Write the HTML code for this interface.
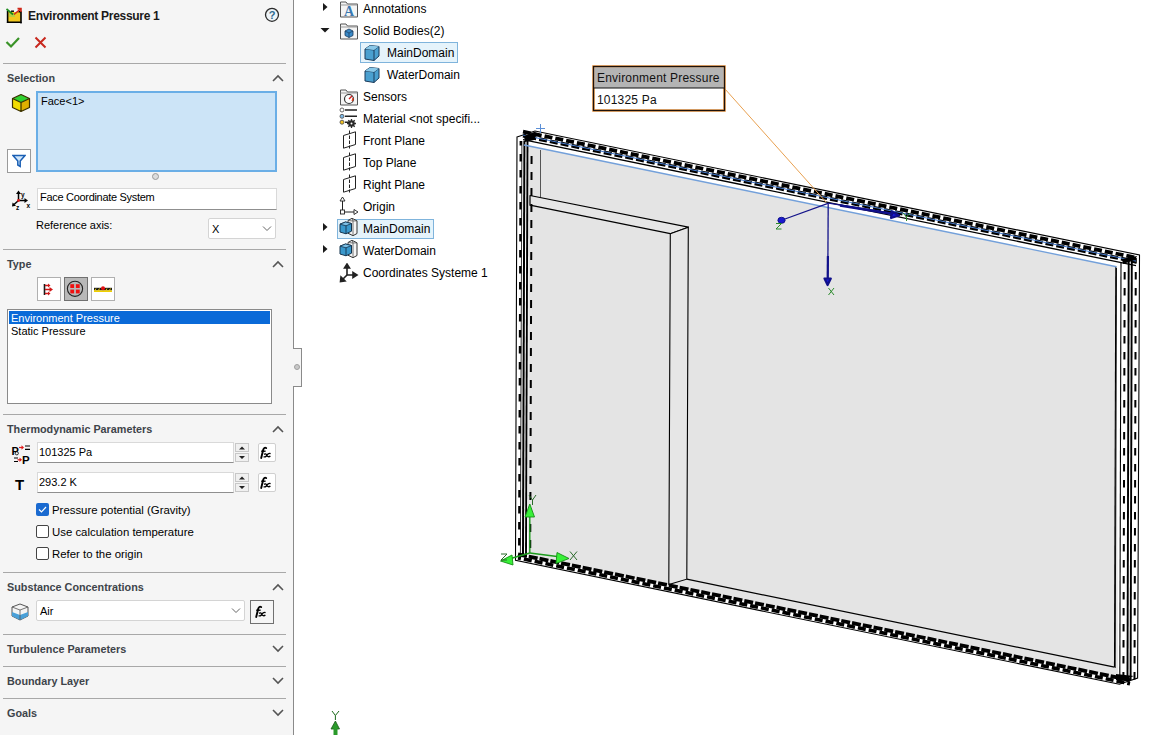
<!DOCTYPE html>
<html><head><meta charset="utf-8">
<style>
*{margin:0;padding:0;box-sizing:border-box}
html,body{width:1153px;height:735px;overflow:hidden;background:#fff;font-family:"Liberation Sans",sans-serif;color:#000}
.a{position:absolute}
#panel{position:absolute;left:0;top:0;width:294px;height:735px;background:#f5f5f5;border-right:1px solid #8a8a8a}
.notch{position:absolute;left:293px;top:348px;width:9px;height:39px;background:#f5f5f5;border:1px solid #8a8a8a;border-left:none}
.sep{position:absolute;left:3px;width:283px;height:1px;background:#a8a8a8}
.hdr{position:absolute;left:7px;font-size:10.8px;font-weight:bold;color:#3e444a;white-space:nowrap}
.t{position:absolute;font-size:11px;white-space:nowrap;color:#000}
.inp{position:absolute;background:#fff;border:1px solid #d9d9d9;border-bottom:1px solid #8f8f8f}
.caret{position:absolute;left:272px;width:12px;height:8px}
.tree{position:absolute;font-size:12px;white-space:nowrap;color:#000}
</style></head><body>
<div id="panel">
  <!-- title -->
  <svg class="a" style="left:5px;top:7px" width="18" height="18" viewBox="0 0 18 18"><rect x="3" y="5" width="13" height="10" fill="#f2c81e"/><rect x="4" y="6" width="6" height="4" fill="#b8d040"/><path d="M2.6 4 V15.2 H16 V4.8 H13.5" stroke="#000" stroke-width="1.6" fill="none"/><path d="M16 15.2 V16.5 M2.6 15.2 V16" stroke="#000" stroke-width="1.4"/><path d="M6 4.2 H9" stroke="#000" stroke-width="1.4"/><path d="M1.5 2 L8 7.5" stroke="#1a8a1a" stroke-width="1.7"/><path d="M9 7.5 L15.8 1.8 M12.5 1.6 H16 V5" stroke="#d0281a" stroke-width="1.6" fill="none"/></svg>
  <div class="a" style="left:28px;top:9px;font-size:12px;letter-spacing:-0.3px;font-weight:bold;color:#1a1a1a;white-space:nowrap">Environment Pressure 1</div>
  <svg class="a" style="left:263px;top:6px" width="18" height="18" viewBox="0 0 18 18"><circle cx="9" cy="8.8" r="6.5" fill="#eef4f8" stroke="#2a2a2a" stroke-width="1.3"/><text x="9" y="12.8" font-size="11" font-weight="bold" text-anchor="middle" fill="#2e6a8e" font-family="Liberation Sans">?</text></svg>
  <svg class="a" style="left:5px;top:35px" width="16" height="14" viewBox="0 0 16 14">
    <path d="M1.5 7 L6 11.5 L14 3" stroke="#3a9328" stroke-width="2.2" fill="none"/>
  </svg>
  <svg class="a" style="left:34px;top:36px" width="13" height="13" viewBox="0 0 13 13">
    <path d="M1.5 1.5 L11.5 11.5 M11.5 1.5 L1.5 11.5" stroke="#c8281e" stroke-width="2" fill="none"/>
  </svg>
  <div class="sep" style="top:63px"></div>

  <!-- Selection -->
  <div class="hdr" style="top:72px">Selection</div>
  <svg class="caret" style="top:74px" viewBox="0 0 12 8"><path d="M1 7 L6 2 L11 7" stroke="#555" stroke-width="1.6" fill="none"/></svg>
  <svg class="a" style="left:11px;top:93px" width="20" height="20" viewBox="0 0 20 20"><path d="M10 9.5 L18.5 5.5 V14.5 L10 18.5 Z" fill="#e0b000"/><path d="M1.5 5.5 L10 9.5 V18.5 L1.5 14.5 Z" fill="#f2dc00"/><path d="M1.5 5.5 L10 1.5 L18.5 5.5 L10 9.5 Z" fill="#30d030"/><path d="M1.5 5.5 L10 1.5 L18.5 5.5 V14.5 L10 18.5 L1.5 14.5 Z M1.5 5.5 L10 9.5 L18.5 5.5 M10 9.5 V18.5" fill="none" stroke="#3a3000" stroke-width="1.2" stroke-linejoin="round"/></svg>
  <div class="a" style="left:36px;top:91px;width:241px;height:81px;background:#cce4f7;border:2px solid #6aaee6"></div>
  <div class="t" style="left:41px;top:95px">Face&lt;1&gt;</div>
  <div class="a" style="left:7px;top:149px;width:24px;height:24px;background:#fff;border:1px solid #9a9a9a"></div>
  <svg class="a" style="left:12px;top:154px" width="14" height="14" viewBox="0 0 14 14">
    <path d="M1 1.5 H13 L8.2 7 V12.5 L5.8 11 V7 Z" fill="#cfe6fb" stroke="#1a5fb4" stroke-width="1.5"/>
  </svg>
  <div class="a" style="left:152px;top:173px;width:7px;height:7px;border-radius:50%;background:#ddd;border:1px solid #999"></div>

  <svg class="a" style="left:9px;top:189px" width="24" height="22" viewBox="0 0 24 22"><path d="M9.5 11.5 V4" stroke="#000" stroke-width="1.5"/><path d="M7 5 L9.5 1.5 L12 5 Z" fill="#000"/><path d="M9.5 11.5 H16.5" stroke="#000" stroke-width="1.5"/><path d="M15.5 9 L19 11.5 L15.5 14 Z" fill="#000"/><path d="M9.5 11.5 L5 15.5" stroke="#000" stroke-width="1.5"/><path d="M3 17.5 L3.6 13.6 L7 16.8 Z" fill="#000"/><circle cx="9.5" cy="11.5" r="1.4" fill="#e01818"/><text x="12" y="8" font-size="6.5" font-weight="bold" font-family="Liberation Sans">y</text><text x="17.5" y="19" font-size="6.5" font-weight="bold" font-family="Liberation Sans">x</text><text x="7" y="21" font-size="6.5" font-weight="bold" font-family="Liberation Sans">z</text></svg>
  <div class="inp" style="left:37px;top:188px;width:240px;height:22px"></div>
  <div class="t" style="left:40px;top:191px;letter-spacing:-0.3px">Face Coordinate System</div>
  <div class="t" style="left:36px;top:219px">Reference axis:</div>
  <div class="inp" style="left:208px;top:218px;width:68px;height:21px;border:1px solid #d4d4d4;border-radius:2px"></div>
  <div class="t" style="left:212px;top:223px">X</div>
  <svg class="a" style="left:262px;top:225px" width="10" height="7" viewBox="0 0 10 7"><path d="M1 1.5 L5 5.5 L9 1.5" stroke="#666" stroke-width="1" fill="none"/></svg>
  <div class="sep" style="top:249px"></div>

  <!-- Type -->
  <div class="hdr" style="top:258px">Type</div>
  <svg class="caret" style="top:260px" viewBox="0 0 12 8"><path d="M1 7 L6 2 L11 7" stroke="#555" stroke-width="1.6" fill="none"/></svg>
  <div class="a" style="left:37px;top:277px;width:24px;height:24px;background:#fff;border:1px solid #b0b0b0"></div>
  <svg class="a" style="left:37px;top:277px" width="24" height="24" viewBox="0 0 24 24"><path d="M7.5 7 V18" stroke="#1a1a1a" stroke-width="1.6"/><path d="M8 8.5 H12 M8 12.5 H13 M8 16.5 H12" stroke="#d01818" stroke-width="1.3"/><path d="M11 6.5 L13.5 8.5 L11 10.5 Z M12.5 10 L16 12.5 L12.5 15 Z M11 14.5 L13.5 16.5 L11 18.5 Z" fill="#d01818"/></svg>
  <div class="a" style="left:64px;top:277px;width:24px;height:24px;background:#b8b8b8;border:1px solid #707070"></div>
  <svg class="a" style="left:64px;top:277px" width="24" height="24" viewBox="0 0 24 24"><circle cx="11" cy="11.8" r="7.6" fill="none" stroke="#222" stroke-width="1.1"/><rect x="6.3" y="7.2" width="3.8" height="3.8" fill="#f01010"/><rect x="11.9" y="7.2" width="3.8" height="3.8" fill="#f01010"/><rect x="6.3" y="12.6" width="3.8" height="3.8" fill="#f01010"/><rect x="11.9" y="12.6" width="3.8" height="3.8" fill="#f01010"/></svg>
  <div class="a" style="left:91px;top:277px;width:24px;height:24px;background:#fff;border:1px solid #b0b0b0"></div>
  <svg class="a" style="left:91px;top:277px" width="24" height="24" viewBox="0 0 24 24"><rect x="3" y="10.8" width="18" height="2.6" fill="#1a1a1a"/><rect x="3" y="13.4" width="18" height="1.6" fill="#f0d000"/><path d="M3.5 14 L5 11.5 M7 14 L8.5 11.5 M14.5 14 L16 11.5 M18 14 L19.5 11.5" stroke="#f0d000" stroke-width="1"/><circle cx="12" cy="11.3" r="2" fill="#e01010"/></svg>
  <div class="a" style="left:7px;top:309px;width:265px;height:95px;background:#fff;border:1px solid #8a8a8a"></div>
  <div class="a" style="left:9px;top:311px;width:261px;height:13px;background:#0a6ad8"></div>
  <div class="t" style="left:11px;top:312px;color:#fff">Environment Pressure</div>
  <div class="t" style="left:11px;top:325px">Static Pressure</div>
  <div class="sep" style="top:414px"></div>

  <!-- Thermodynamic -->
  <div class="hdr" style="top:423px">Thermodynamic Parameters</div>
  <svg class="caret" style="top:425px" viewBox="0 0 12 8"><path d="M1 7 L6 2 L11 7" stroke="#555" stroke-width="1.6" fill="none"/></svg>
  <svg class="a" style="left:10px;top:443px" width="22" height="22" viewBox="0 0 22 22"><text x="1.5" y="11.5" font-size="11" font-weight="bold" font-family="Liberation Sans">P</text><circle cx="6.8" cy="10.3" r="1.6" fill="#f4f4f4" stroke="#000" stroke-width="0.8"/><path d="M9 4.5 H12.5" stroke="#e01818" stroke-width="1.2"/><path d="M11.5 2.3 L14 4.5 L11.5 6.7 Z" fill="#e01818"/><path d="M15 3 H20 M15 6.3 H20" stroke="#000" stroke-width="1.2"/><path d="M4 15 H8 M4 18.5 H8" stroke="#000" stroke-width="1.2"/><path d="M7.5 16.8 H10.5" stroke="#e01818" stroke-width="1.2"/><path d="M9.5 14.6 L12 16.8 L9.5 19 Z" fill="#e01818"/><text x="12" y="21" font-size="11.5" font-weight="bold" font-family="Liberation Sans">P</text></svg>
  <div class="inp" style="left:37px;top:442px;width:197px;height:21px"></div>
  <div class="t" style="left:39px;top:446px">101325 Pa</div>
  <div class="a" style="left:235px;top:443px;width:14px;height:9px;background:#f0f0f0;border:1px solid #c8c8c8"></div>
  <div class="a" style="left:235px;top:453px;width:14px;height:9px;background:#f0f0f0;border:1px solid #c8c8c8"></div>
  <svg class="a" style="left:238px;top:445px" width="8" height="16" viewBox="0 0 8 16"><path d="M1 4.5 L4 1.5 L7 4.5 Z M1 11 L4 14 L7 11 Z" fill="#222"/></svg>
  <div class="a" style="left:258px;top:443px;width:18px;height:19px;background:#fff;border:1px solid #d0d0d0;border-radius:2px"></div>
  <svg class="a" style="left:257px;top:446px" width="16" height="14" viewBox="0 0 16 14"><path d="M9.2 2 Q7 1 6.2 3.8 L4.2 12" stroke="#000" stroke-width="1.9" fill="none" stroke-linecap="round"/><path d="M4.2 5.2 H8.6" stroke="#000" stroke-width="1.4"/><path d="M7 8.4 Q8.6 7 9.8 9.2 Q11 11.6 13.4 10.2 M13.6 7.6 Q11.6 6.8 9.8 9.2 Q8.6 11.6 6.6 10.6" stroke="#000" stroke-width="1.4" fill="none"/></svg>

  <div class="a" style="left:15px;top:476px;font-size:15px;font-weight:bold">T</div>
  <div class="inp" style="left:37px;top:472px;width:197px;height:21px"></div>
  <div class="t" style="left:39px;top:476px">293.2 K</div>
  <div class="a" style="left:235px;top:473px;width:14px;height:9px;background:#f0f0f0;border:1px solid #c8c8c8"></div>
  <div class="a" style="left:235px;top:483px;width:14px;height:9px;background:#f0f0f0;border:1px solid #c8c8c8"></div>
  <svg class="a" style="left:238px;top:475px" width="8" height="16" viewBox="0 0 8 16"><path d="M1 4.5 L4 1.5 L7 4.5 Z M1 11 L4 14 L7 11 Z" fill="#222"/></svg>
  <div class="a" style="left:258px;top:473px;width:18px;height:19px;background:#fff;border:1px solid #d0d0d0;border-radius:2px"></div>
  <svg class="a" style="left:257px;top:476px" width="16" height="14" viewBox="0 0 16 14"><path d="M9.2 2 Q7 1 6.2 3.8 L4.2 12" stroke="#000" stroke-width="1.9" fill="none" stroke-linecap="round"/><path d="M4.2 5.2 H8.6" stroke="#000" stroke-width="1.4"/><path d="M7 8.4 Q8.6 7 9.8 9.2 Q11 11.6 13.4 10.2 M13.6 7.6 Q11.6 6.8 9.8 9.2 Q8.6 11.6 6.6 10.6" stroke="#000" stroke-width="1.4" fill="none"/></svg>

  <div class="a" style="left:36px;top:503px;width:13px;height:13px;background:#1a6ad0;border-radius:2px"></div>
  <svg class="a" style="left:37px;top:504px" width="11" height="11" viewBox="0 0 11 11"><path d="M2 5.5 L4.5 8 L9 3" stroke="#fff" stroke-width="1.2" fill="none"/></svg>
  <div class="t" style="left:52px;top:504px;font-size:11.4px">Pressure potential (Gravity)</div>
  <div class="a" style="left:36px;top:525px;width:13px;height:13px;background:#fff;border:1px solid #444;border-radius:2px"></div>
  <div class="t" style="left:52px;top:526px;font-size:11.4px">Use calculation temperature</div>
  <div class="a" style="left:36px;top:547px;width:13px;height:13px;background:#fff;border:1px solid #444;border-radius:2px"></div>
  <div class="t" style="left:52px;top:548px;font-size:11.4px">Refer to the origin</div>
  <div class="sep" style="top:572px"></div>

  <!-- Substance -->
  <div class="hdr" style="top:581px">Substance Concentrations</div>
  <svg class="caret" style="top:583px" viewBox="0 0 12 8"><path d="M1 7 L6 2 L11 7" stroke="#555" stroke-width="1.6" fill="none"/></svg>
  <svg class="a" style="left:10px;top:602px" width="20" height="19" viewBox="0 0 20 19">
    <path d="M2 5 L10 2 L18 5 V14 L10 18 L2 14 Z" fill="#f4f4f4" stroke="#555" stroke-width="1"/>
    <path d="M2 10 L10 13 L18 10 V14 L10 18 L2 14 Z" fill="#4aa0d8"/>
    <path d="M2 5 L10 8 L18 5 M10 8 V18" stroke="#555" stroke-width="0.8" fill="none"/>
  </svg>
  <div class="inp" style="left:36px;top:600px;width:209px;height:21px;border:1px solid #d4d4d4;border-radius:2px"></div>
  <div class="t" style="left:40px;top:605px">Air</div>
  <svg class="a" style="left:231px;top:607px" width="10" height="7" viewBox="0 0 10 7"><path d="M1 1.5 L5 5.5 L9 1.5" stroke="#666" stroke-width="1" fill="none"/></svg>
  <div class="a" style="left:250px;top:600px;width:24px;height:24px;background:#f5f5f5;border:1px solid #707070"></div>
  <svg class="a" style="left:252px;top:605px" width="16" height="14" viewBox="0 0 16 14"><path d="M9.2 2 Q7 1 6.2 3.8 L4.2 12" stroke="#000" stroke-width="1.9" fill="none" stroke-linecap="round"/><path d="M4.2 5.2 H8.6" stroke="#000" stroke-width="1.4"/><path d="M7 8.4 Q8.6 7 9.8 9.2 Q11 11.6 13.4 10.2 M13.6 7.6 Q11.6 6.8 9.8 9.2 Q8.6 11.6 6.6 10.6" stroke="#000" stroke-width="1.4" fill="none"/></svg>
  <div class="sep" style="top:634px"></div>

  <div class="hdr" style="top:643px">Turbulence Parameters</div>
  <svg class="caret" style="top:645px" viewBox="0 0 12 8"><path d="M1 1 L6 6 L11 1" stroke="#555" stroke-width="1.6" fill="none"/></svg>
  <div class="sep" style="top:666px"></div>
  <div class="hdr" style="top:675px">Boundary Layer</div>
  <svg class="caret" style="top:677px" viewBox="0 0 12 8"><path d="M1 1 L6 6 L11 1" stroke="#555" stroke-width="1.6" fill="none"/></svg>
  <div class="sep" style="top:698px"></div>
  <div class="hdr" style="top:707px">Goals</div>
  <svg class="caret" style="top:709px" viewBox="0 0 12 8"><path d="M1 1 L6 6 L11 1" stroke="#555" stroke-width="1.6" fill="none"/></svg>
</div>
<div class="notch"></div>
<div class="a" style="left:294px;top:364px;width:6px;height:6px;border-radius:50%;background:#c8c8c8;border:1px solid #a0a0a0"></div>

<!-- TREE -->
<div id="tree">
<!-- selection boxes -->
<div class="a" style="left:360px;top:42px;width:98px;height:21px;background:#e5f3fb;border:1px solid #7fb4dc"></div>
<div class="a" style="left:337px;top:219px;width:97px;height:20px;background:#e5f3fb;border:1px solid #7fb4dc"></div>
<!-- arrows -->
<svg class="a" style="left:320px;top:1px" width="10" height="12" viewBox="0 0 10 12"><path d="M3 2 L7.5 6 L3 10 Z" fill="#1a1a1a"/></svg>
<svg class="a" style="left:319px;top:25px" width="12" height="10" viewBox="0 0 12 10"><path d="M1.5 3 L10.5 3 L6 7.5 Z" fill="#1a1a1a"/></svg>
<svg class="a" style="left:320px;top:221px" width="10" height="12" viewBox="0 0 10 12"><path d="M3 2 L7.5 6 L3 10 Z" fill="#1a1a1a"/></svg>
<svg class="a" style="left:320px;top:243px" width="10" height="12" viewBox="0 0 10 12"><path d="M3 2 L7.5 6 L3 10 Z" fill="#1a1a1a"/></svg>
<!-- icons -->
<svg class="a" style="left:339px;top:0px" width="20" height="18" viewBox="0 0 20 18"><path d="M1.5 2 H7 L8.5 4 H18.5 V17 H1.5 Z" fill="#f4f4f4" stroke="#555" stroke-width="1"/><path d="M1.5 5 H18.5" stroke="#999" stroke-width="1"/><text x="10" y="15.5" font-size="14" font-weight="bold" font-family="Liberation Serif" fill="#3a78b0" text-anchor="middle">A</text></svg>
<svg class="a" style="left:339px;top:22px" width="20" height="18" viewBox="0 0 20 18"><path d="M1.5 2 H7 L8.5 4 H18.5 V17 H1.5 Z" fill="#f4f4f4" stroke="#555" stroke-width="1"/><path d="M1.5 5 H18.5" stroke="#999" stroke-width="1"/><path d="M6 9 L10 7 L14 9 V13.5 L10 15.5 L6 13.5 Z" fill="#3a8ac8" stroke="#1a3a5a" stroke-width="0.8"/><path d="M6 9 L10 11 L14 9 M10 11 V15.5" stroke="#1a3a5a" stroke-width="0.7" fill="none"/></svg>
<svg class="a" style="left:363px;top:44px" width="18" height="18" viewBox="0 0 18 18"><path d="M2 5 L7 1.5 L16 2.5 V12 L11 16.5 L2 15 Z" fill="#4aa0d0" stroke="#1a3a5a" stroke-width="1"/><path d="M2 5 L11 6 L16 2.5 M11 6 V16.5" stroke="#1a3a5a" stroke-width="1" fill="none"/><path d="M2 5 L11 6 L16 2.5 L7 1.5 Z" fill="#8ac8e8"/></svg>
<svg class="a" style="left:363px;top:66px" width="18" height="18" viewBox="0 0 18 18"><path d="M2 5 L7 1.5 L16 2.5 V12 L11 16.5 L2 15 Z" fill="#4aa0d0" stroke="#1a3a5a" stroke-width="1"/><path d="M2 5 L11 6 L16 2.5 M11 6 V16.5" stroke="#1a3a5a" stroke-width="1" fill="none"/><path d="M2 5 L11 6 L16 2.5 L7 1.5 Z" fill="#8ac8e8"/></svg>
<svg class="a" style="left:339px;top:88px" width="20" height="18" viewBox="0 0 20 18"><path d="M1.5 2 H7 L8.5 4 H18.5 V17 H1.5 Z" fill="#f4f4f4" stroke="#555" stroke-width="1"/><path d="M1.5 5 H18.5" stroke="#999" stroke-width="1"/><circle cx="10" cy="11" r="4.5" fill="#fff" stroke="#333" stroke-width="1.2"/><path d="M10 11 L13 8" stroke="#d02020" stroke-width="1.5"/><path d="M13 13 A4 4 0 0 0 14 10" stroke="#e04020" stroke-width="1.5" fill="none"/></svg>
<svg class="a" style="left:338px;top:107px" width="22" height="22" viewBox="0 0 22 22"><circle cx="4" cy="3" r="2" fill="#fff" stroke="#555" stroke-width="0.9"/><circle cx="4" cy="9.3" r="2" fill="#7ab8e8" stroke="#555" stroke-width="0.9"/><circle cx="4" cy="15.2" r="2" fill="#f0c020" stroke="#555" stroke-width="0.9"/><path d="M7 3 H19 M7 9.3 H19 M7 15.2 H11" stroke="#222" stroke-width="1.6"/><circle cx="13.5" cy="16.5" r="3.2" fill="#2a2a2a"/><path d="M13.5 12 V21 M9 16.5 H18 M10.3 13.3 L16.7 19.7 M16.7 13.3 L10.3 19.7" stroke="#2a2a2a" stroke-width="1.3"/><circle cx="13.5" cy="16.5" r="1" fill="#fff"/></svg>
<svg class="a" style="left:340px;top:130px" width="18" height="20" viewBox="0 0 18 20"><path d="M3.5 5.5 L15.5 1.8 V14.5 L3.5 18.2 Z" fill="none" stroke="#222" stroke-width="1"/><path d="M9.5 0.5 V18.5" stroke="#222" stroke-width="1" stroke-dasharray="3.5 1.5"/></svg>
<svg class="a" style="left:340px;top:152px" width="18" height="20" viewBox="0 0 18 20"><path d="M3.5 5.5 L15.5 1.8 V14.5 L3.5 18.2 Z" fill="none" stroke="#222" stroke-width="1"/><path d="M9.5 0.5 V18.5" stroke="#222" stroke-width="1" stroke-dasharray="3.5 1.5"/></svg>
<svg class="a" style="left:340px;top:174px" width="18" height="20" viewBox="0 0 18 20"><path d="M3.5 5.5 L15.5 1.8 V14.5 L3.5 18.2 Z" fill="none" stroke="#222" stroke-width="1"/><path d="M9.5 0.5 V18.5" stroke="#222" stroke-width="1" stroke-dasharray="3.5 1.5"/></svg>
<svg class="a" style="left:338px;top:195px" width="22" height="20" viewBox="0 0 22 20"><path d="M4.5 17 V3.5" stroke="#222" stroke-width="1" fill="none"/><path d="M2 6 L4.5 2 L7 6 Z" fill="#fff" stroke="#222" stroke-width="0.9"/><path d="M4.5 17 H17" stroke="#222" stroke-width="1" fill="none"/><path d="M16 14.5 L20 17 L16 19.5 Z" fill="#fff" stroke="#222" stroke-width="0.9"/><rect x="2.5" y="15" width="4" height="4" fill="#fff" stroke="#222" stroke-width="0.9"/></svg>
<svg class="a" style="left:338px;top:217px" width="20" height="20" viewBox="0 0 20 20"><path d="M10 3.5 L14 1.3 L19 3.8 V16.5 L15 18.7 L10 16.2 Z" fill="#f6f6f6" stroke="#333" stroke-width="1"/><path d="M14 1.3 L15 4 V18.7 M10 3.5 L15 4 L19 3.8" stroke="#555" stroke-width="0.8" fill="none"/><path d="M2 7.2 L7.5 5 L13.5 6.5 V14.2 L8 16.8 L2 15 Z" fill="#3a98cc" stroke="#14344e" stroke-width="1"/><path d="M2 7.2 L7.5 5 L13.5 6.5 L8 8.8 Z" fill="#7cc0e6" stroke="#14344e" stroke-width="0.8"/><path d="M8 8.8 V16.8" stroke="#14344e" stroke-width="0.9"/></svg>
<svg class="a" style="left:338px;top:239px" width="20" height="20" viewBox="0 0 20 20"><path d="M10 3.5 L14 1.3 L19 3.8 V16.5 L15 18.7 L10 16.2 Z" fill="#f6f6f6" stroke="#333" stroke-width="1"/><path d="M14 1.3 L15 4 V18.7 M10 3.5 L15 4 L19 3.8" stroke="#555" stroke-width="0.8" fill="none"/><path d="M2 7.2 L7.5 5 L13.5 6.5 V14.2 L8 16.8 L2 15 Z" fill="#3a98cc" stroke="#14344e" stroke-width="1"/><path d="M2 7.2 L7.5 5 L13.5 6.5 L8 8.8 Z" fill="#7cc0e6" stroke="#14344e" stroke-width="0.8"/><path d="M8 8.8 V16.8" stroke="#14344e" stroke-width="0.9"/></svg>
<svg class="a" style="left:339px;top:263px" width="20" height="20" viewBox="0 0 20 20"><path d="M8 12 V2 M5.5 5 L8 1 L10.5 5 Z" stroke="#222" stroke-width="1.6" fill="#222"/><path d="M8 12 H17 M14 9.5 L18 12 L14 14.5 Z" stroke="#222" stroke-width="1.6" fill="#222"/><path d="M8 12 L2 18 M2 14 L1.5 18.5 L6 18 Z" stroke="#222" stroke-width="1.6" fill="#222"/></svg>
<div class="tree" style="left:363px;top:2px">Annotations</div>
<div class="tree" style="left:363px;top:24px">Solid Bodies(2)</div>
<div class="tree" style="left:387px;top:46px">MainDomain</div>
<div class="tree" style="left:387px;top:68px">WaterDomain</div>
<div class="tree" style="left:363px;top:90px">Sensors</div>
<div class="tree" style="left:363px;top:112px">Material &lt;not specifi...</div>
<div class="tree" style="left:363px;top:134px">Front Plane</div>
<div class="tree" style="left:363px;top:156px">Top Plane</div>
<div class="tree" style="left:363px;top:178px">Right Plane</div>
<div class="tree" style="left:363px;top:200px">Origin</div>
<div class="tree" style="left:363px;top:222px">MainDomain</div>
<div class="tree" style="left:363px;top:244px">WaterDomain</div>
<div class="tree" style="left:363px;top:266px">Coordinates Systeme 1</div>
</div>

<!-- VIEWPORT SVG -->
<svg id="vp" class="a" style="left:0;top:0" width="1153" height="735" viewBox="0 0 1153 735">
<polygon points="517,137 535,131 1139.5,255 1137.6,678 1119.4,684.3 515.5,560.4" fill="#fff" stroke="#000" stroke-width="1.1"/>
<polygon points="528.5,145.9 1116,266.7 1118,670.0 1119,678.4 528,557.0" fill="#e4e4e4"/>
<polygon points="530,195.5 688.3,227.2 670.3,233.7 530,205.2" fill="#e6e6e6" stroke="#000" stroke-width="1.2" stroke-linejoin="round"/>
<polygon points="670.3,233.7 688.3,227.2 686.8,579.2 668.8,584.6" fill="#e6e6e6" stroke="#000" stroke-width="1.1"/>
<line x1="686.8" y1="579.2" x2="1114.5" y2="667.1" stroke="#000" stroke-width="1.2"/>
<line x1="1115.8" y1="266.5" x2="1114.5" y2="667.0" stroke="#000" stroke-width="1.1"/>
<line x1="540.5" y1="150.0" x2="540.5" y2="197.0" stroke="#555" stroke-width="1"/>
<line x1="520.8" y1="141.0" x2="519.2" y2="557.0" stroke="#000" stroke-width="2.4" stroke-dasharray="7.5 8.5" stroke-dashoffset="3"/>
<line x1="521.9" y1="141.0" x2="520.4" y2="557.0" stroke="#000" stroke-width="0.8"/>
<line x1="524.4" y1="141.0" x2="523.0" y2="557.0" stroke="#000" stroke-width="2"/>
<line x1="527.5" y1="141.0" x2="526.0" y2="557.0" stroke="#000" stroke-width="1.9"/>
<line x1="531.6" y1="150.0" x2="530.2" y2="557.0" stroke="#000" stroke-width="2" stroke-dasharray="8 8" stroke-dashoffset="10"/>
<line x1="1116.5" y1="268.0" x2="1115.2" y2="668.0" stroke="#000" stroke-width="0.9"/>
<line x1="1121.0" y1="262.0" x2="1119.8" y2="680.0" stroke="#000" stroke-width="1.1"/>
<line x1="1124.7" y1="262.0" x2="1123.4" y2="680.0" stroke="#000" stroke-width="2" stroke-dasharray="7.5 8.5" stroke-dashoffset="6"/>
<line x1="1128.7" y1="260.0" x2="1127.5" y2="680.0" stroke="#000" stroke-width="1.9"/>
<line x1="1131.8" y1="259.0" x2="1130.6" y2="680.0" stroke="#000" stroke-width="1.9"/>
<line x1="1135.8" y1="258.0" x2="1134.5" y2="680.0" stroke="#000" stroke-width="2" stroke-dasharray="7.5 8.5" stroke-dashoffset="2"/>
<line x1="523.0" y1="131.7" x2="1136.0" y2="257.7" stroke="#000" stroke-width="3.8" stroke-dasharray="8 3"/>
<line x1="523.0" y1="135.7" x2="1136.0" y2="261.7" stroke="#000" stroke-width="3.8" stroke-dasharray="8 3" stroke-dashoffset="5.5"/>
<line x1="523.0" y1="135.1" x2="1136.0" y2="261.1" stroke="#4a7fd0" stroke-width="1.0"/>
<line x1="523.0" y1="139.7" x2="1136.0" y2="265.7" stroke="#000" stroke-width="1.3"/>
<line x1="524.0" y1="145.0" x2="1116.5" y2="266.8" stroke="#73a0da" stroke-width="1.4"/>
<line x1="518.0" y1="554.3" x2="1130.0" y2="680.1" stroke="#000" stroke-width="3.8" stroke-dasharray="9 2"/>
<line x1="518.0" y1="557.9" x2="1130.0" y2="683.7" stroke="#000" stroke-width="3.6" stroke-dasharray="8 3" stroke-dashoffset="5"/>
<polygon points="524,136 534,132 537,133 534,140 525,142" fill="#000"/>
<path d="M536 128.5 H545 M540.5 124 V133" stroke="#5b8fd6" stroke-width="1"/>
<polygon points="1116,674 1134,676 1121,681 1116,680" fill="#000"/>
<polygon points="1122,259 1137,256 1135,260 1123,264" fill="#000"/>
<line x1="725.0" y1="89.0" x2="826.0" y2="202.0" stroke="#e8a050" stroke-width="1"/>
<rect x="593.5" y="66.5" width="131" height="44" fill="#fff" stroke="#f0a050" stroke-width="2.6"/>
<rect x="594.3" y="67.3" width="129.4" height="20.7" fill="#b4b4b4"/>
<rect x="593.5" y="66.5" width="131" height="44" fill="none" stroke="#1e120a" stroke-width="1.3"/>
<line x1="594.0" y1="88.0" x2="724.0" y2="88.0" stroke="#111" stroke-width="1.2"/>
<text x="597" y="82" font-size="12" letter-spacing="0.2" font-family="Liberation Sans" fill="#111">Environment Pressure</text>
<text x="597" y="104" font-size="12" letter-spacing="0.2" font-family="Liberation Sans" fill="#111">101325 Pa</text>
<g stroke="#14148a" stroke-width="1.3"><line x1="828.7" y1="203.2" x2="785" y2="219"/><line x1="828.7" y1="203.2" x2="893" y2="213.5"/><line x1="828.2" y1="203.2" x2="827.8" y2="279"/></g>
<ellipse cx="781.5" cy="220.3" rx="3.6" ry="3" fill="#1a1ad0" stroke="#10108a" stroke-width="1"/>
<polygon points="899,215.5 892,211.5 891,218" fill="#1a1ad0" stroke="#10108a" stroke-width="2.2" stroke-linejoin="round"/>
<polygon points="827.6,285 824.5,278.5 830.8,278.5" fill="#1a1ad0" stroke="#10108a" stroke-width="2.2" stroke-linejoin="round"/>
<line x1="827.9" y1="256" x2="827.7" y2="279" stroke="#10108a" stroke-width="2.2"/>
<line x1="840" y1="205.5" x2="893" y2="214" stroke="#10108a" stroke-width="2.4"/>
<g stroke="#2a8a2a" stroke-width="1" fill="none"><path d="M776 223.5 H781.5 L776 229 H781.5"/><path d="M903 213 L906.5 217 L910 213 M906.5 217 V221"/><path d="M828.5 288 L834 295 M834 288 L828.5 295"/></g>
<g stroke="#1c9c1c" stroke-width="1.4"><line x1="529.8" y1="553" x2="529.8" y2="514"/><line x1="529.8" y1="553" x2="561" y2="557"/><line x1="529.8" y1="553" x2="509" y2="559"/></g>
<polygon points="529.8,504 525,517 534.5,517" fill="#38f038" stroke="#169016" stroke-width="0.9"/>
<polygon points="569,558.5 557,552.5 556,563.5" fill="#38f038" stroke="#169016" stroke-width="0.9"/>
<polygon points="500.5,561 512,555 513,565" fill="#38f038" stroke="#169016" stroke-width="0.9"/>
<g stroke="#2a6a2a" stroke-width="1" fill="none"><path d="M529 495 L532.5 500 L536 495 M532.5 500 V505"/><path d="M570 551.5 L577 560 M577 551.5 L570 560"/><path d="M501 554 H507 L501 560 H507"/></g>
<g stroke="#1a6a1a" stroke-width="1" fill="none"><path d="M332 711 L335.4 715.5 L339 711 M335.4 715.5 V720"/></g>
<polygon points="335.4,721 331,729 339.5,729" fill="#2a9a2a" stroke="#1a5a1a" stroke-width="0.8"/><rect x="333.5" y="728" width="4" height="7" fill="#2a9a2a"/>
</svg>
</body></html>
